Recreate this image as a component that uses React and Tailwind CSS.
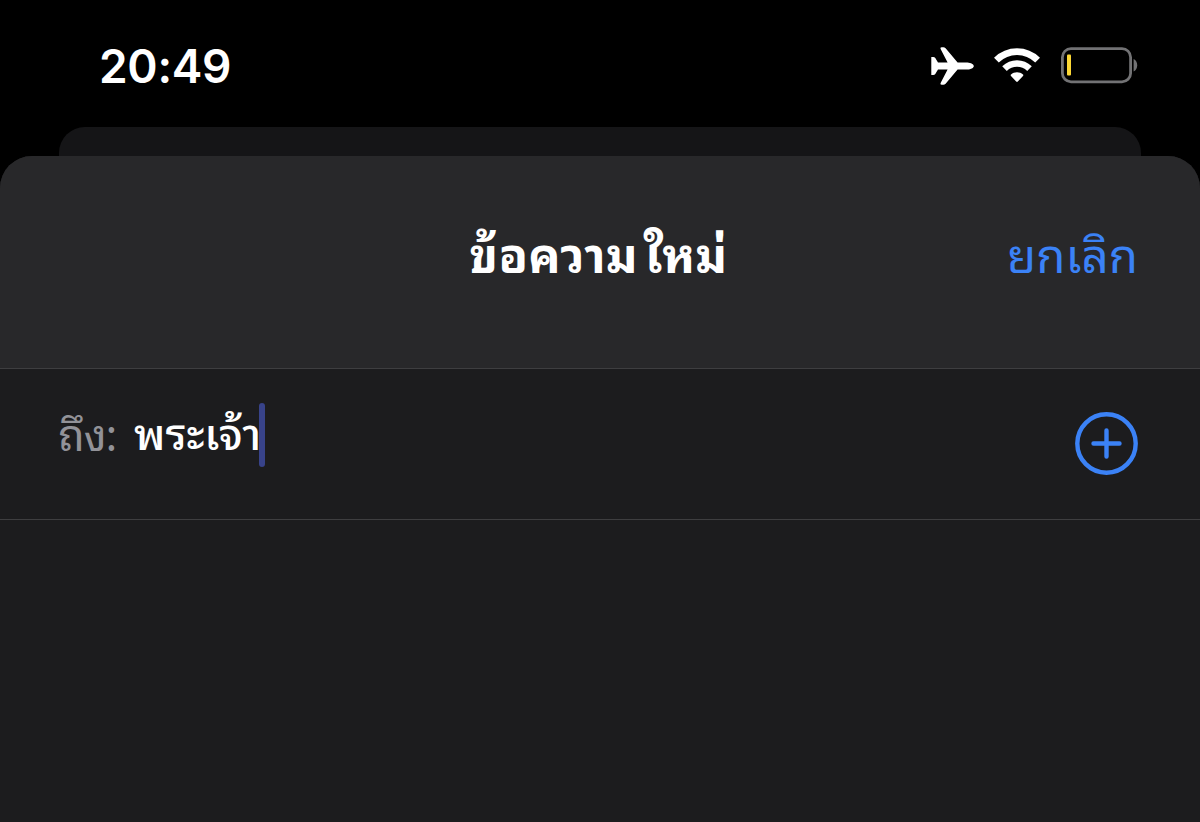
import { useState } from "react";

function AirplaneIcon() {
  return (
    <svg width="44" height="40" viewBox="0 0 44 40" fill="#fff">
      <path d="M1.3 10.9H3.2Q4.6 10.9 5.3 11.9L8 16.4H17.6L10.6 3Q9.8 1.2 11.6 1.2H13.3Q14.6 1.2 15.6 2.3L27.6 16.4H37.5C41 16.6 43.8 18.2 43.8 20C43.8 21.8 41 23.4 37.5 23.6H27.6L15.6 37.7Q14.6 38.8 13.3 38.8H11.6Q9.8 38.8 10.6 37L17.6 23.6H8L5.3 28.1Q4.6 29.1 3.2 29.1H1.3Z" />
    </svg>
  );
}

function WifiIcon() {
  return (
    <svg width="46" height="36" viewBox="0 0 46 36" fill="none">
      <g stroke="#fff">
        <path d="M2.4 12.2C14 0.8 32 0.8 43.6 12.2" strokeWidth="6.8" />
        <path d="M10.5 20.6C17.6 13.8 28.4 13.8 35.5 20.6" strokeWidth="6.6" />
      </g>
      <path
        d="M17 26.6C20.2 23.6 25.8 23.6 29 26.6Q29.7 27.3 29 28L23.8 33.6Q23 34.3 22.2 33.6L17 28Q16.3 27.3 17 26.6Z"
        fill="#fff"
      />
    </svg>
  );
}

function BatteryIcon() {
  return (
    <svg width="77" height="38" viewBox="0 0 77 38" fill="none">
      <rect x="1.4" y="1.6" width="68.2" height="33.2" rx="8.6" stroke="#727274" strokeWidth="2.8" />
      <path d="M72.6 12C77.4 13.8 77.4 22.6 72.6 24.4Z" fill="#727274" />
      <rect x="6" y="7.5" width="4" height="21" rx="1" fill="#fdd835" />
    </svg>
  );
}

function StatusBar() {
  return (
    <div className="flex h-[127px] shrink-0 items-start justify-between pl-[99px] pr-[62px] pt-[46px] text-white">
      <span className="font-['Inter',sans-serif] text-[46px] font-semibold leading-[40px] tracking-[-0.3px]">
        20:49
      </span>
      <div className="flex items-center">
        <AirplaneIcon />
        <span className="w-5" />
        <WifiIcon />
        <span className="w-[21px]" />
        <BatteryIcon />
      </div>
    </div>
  );
}

function SheetHeader() {
  return (
    <header className="grid h-[213px] grid-cols-[1fr_auto_1fr] items-start border-b border-[#3e3e40] bg-[#28282a] px-[62px] pt-[64px]">
      <span />
      <h1 className="-ml-[3px] whitespace-nowrap text-[48px] font-bold leading-[64px] tracking-[0.4px] text-white">
        ข้อความ<span className="ml-1.5">ใหม่</span>
      </h1>
      <button className="justify-self-end whitespace-nowrap text-[47.5px] leading-[64px] text-[#3b82f6]">
        ยกเลิก
      </button>
    </header>
  );
}

function RecipientRow() {
  const [recipient] = useState("พระเจ้า");

  return (
    <div className="flex h-[151px] items-start border-b border-[#3e3e40] pl-[58px] pr-[62px] pt-[34px]">
      <span className="w-[76px] whitespace-nowrap text-[44px] leading-[56px] tracking-[-1px] text-[#929298]">
        ถึง:
      </span>
      <span className="whitespace-nowrap text-[44px] font-medium leading-[55px] text-white">
        {recipient}
      </span>
      <span className="-ml-[2px] h-16 w-1.5 rounded-full bg-[#38438a]" />
      <button className="ml-auto mt-[9px]">
        <svg width="63" height="63" viewBox="0 0 63 63" fill="none" stroke="#3b82f6">
          <circle cx="31.5" cy="31.5" r="29.2" strokeWidth="4.4" />
          <path d="M31.5 18.5V44.5M18.5 31.5H44.5" strokeWidth="4.4" strokeLinecap="round" />
        </svg>
      </button>
    </div>
  );
}

export default function App() {
  return (
    <div className="flex h-screen flex-col overflow-hidden bg-black font-['Noto_Sans_Thai_Looped','Loma','Noto_Sans',sans-serif]">
      <StatusBar />
      {/* Card peeking out behind the sheet */}
      <div className="mx-[59px] h-[29px] shrink-0 rounded-t-[26px] bg-[#151517]" />
      <main className="flex-1 overflow-hidden rounded-t-[32px] bg-[#1c1c1e]">
        <SheetHeader />
        <RecipientRow />
      </main>
    </div>
  );
}
